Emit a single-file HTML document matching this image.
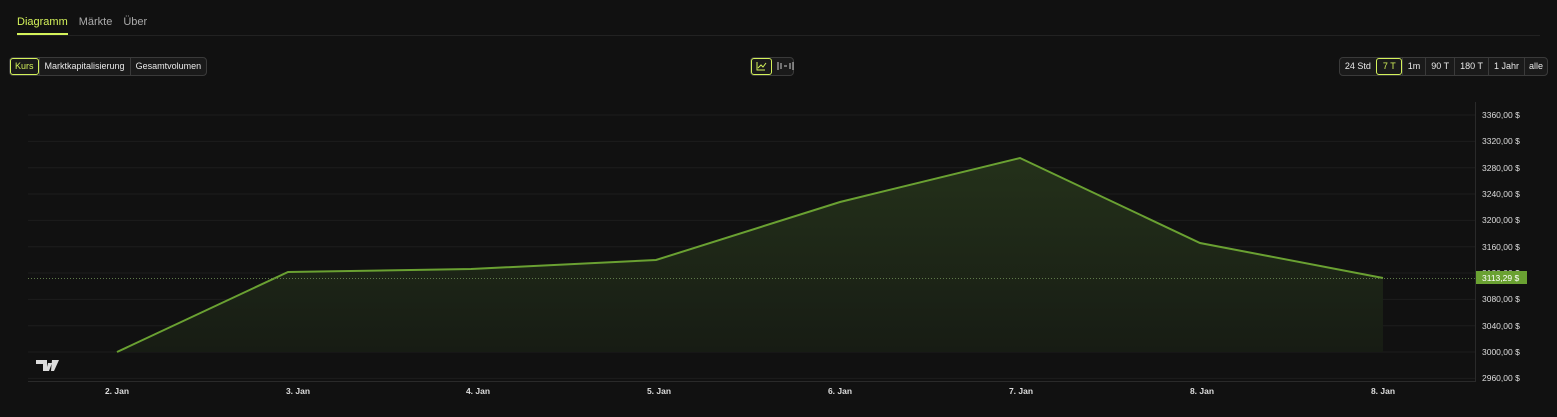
<!DOCTYPE html>
<html><head><style>
body{margin:0;background:#111;width:1557px;height:417px;overflow:hidden;font-family:"Liberation Sans",sans-serif;color:#ddd;position:relative}
.tabs{position:absolute;left:17px;top:16px;font-size:11px;display:flex;gap:11px}
.tabs span{color:#aaa}
.tabs .a{color:#d4f25a;border-bottom:2px solid #d4f25a;padding-bottom:5px}
.hr{position:absolute;left:17px;right:17px;top:35px;height:1px;background:#222}
.grp{position:absolute;top:57px;display:flex;border:1px solid #3a3a3a;border-radius:4px;background:#1a1a1a;font-size:9px;height:17px;white-space:nowrap}
.grp span{padding:0 5px;line-height:17px;border-left:1px solid #3a3a3a;color:#e8e8e8;white-space:nowrap}
.grp span:first-child{border-left:none}
.grp .s{outline:1px solid #d4f25a;outline-offset:-1px;border-radius:3px;color:#d4f25a}
svg{position:absolute;left:0;top:0}
</style></head><body>
<div class="tabs"><span class="a">Diagramm</span><span>Märkte</span><span>Über</span></div>
<div class="hr"></div>
<div class="grp" style="left:9px"><span class="s">Kurs</span><span>Marktkapitalisierung</span><span>Gesamtvolumen</span></div>
<div class="grp" style="left:750px;width:42px"><span class="s" style="width:11px;padding:0 5px"></span><span style="width:10px;border:none"></span></div>
<div class="grp" style="right:9px"><span>24 Std</span><span class="s" style="padding:0 6px">7 T</span><span>1m</span><span>90 T</span><span>180 T</span><span>1 Jahr</span><span style="padding:0 4px">alle</span></div>
<svg width="1557" height="417">
<defs><linearGradient id="g" x1="0" y1="0" x2="0" y2="1" gradientUnits="objectBoundingBox"><stop offset="0" stop-color="#24311a"/><stop offset="1" stop-color="#171c14"/></linearGradient></defs>
<g stroke="#d4f25a" stroke-width="1" fill="none"><polyline points="757,62 757,70 765,70"/><polyline points="758,68 761,65 763,67 766,63"/></g>
<g stroke="#ccc" stroke-width="1" fill="none"><path d="M778,62v8M781,63v6M784,66h3M790,63v6M793,62v8"/></g>
<g stroke="#1d1d1d">
<line x1="28" x2="1475" y1="115" y2="115"/><line x1="28" x2="1475" y1="141.4" y2="141.4"/><line x1="28" x2="1475" y1="167.7" y2="167.7"/><line x1="28" x2="1475" y1="194" y2="194"/><line x1="28" x2="1475" y1="220.4" y2="220.4"/><line x1="28" x2="1475" y1="246.7" y2="246.7"/><line x1="28" x2="1475" y1="273" y2="273"/><line x1="28" x2="1475" y1="299.4" y2="299.4"/><line x1="28" x2="1475" y1="325.7" y2="325.7"/><line x1="28" x2="1475" y1="352" y2="352"/><line x1="28" x2="1475" y1="378.4" y2="378.4"/>
</g>
<line x1="28" x2="1475" y1="381.5" y2="381.5" stroke="#2a2a2a"/>
<line x1="1475.5" x2="1475.5" y1="102" y2="382" stroke="#2a2a2a"/>
<path d="M117,352 L288,272 L471,269 L656,260 L840,202 L1020,158 L1200,243 L1383,278 L1383,352 Z" fill="url(#g)"/>
<polyline points="117,352 288,272 471,269 656,260 840,202 1020,158 1200,243 1383,278" fill="none" stroke="#6aa132" stroke-width="2"/>
<line x1="28" x2="1475" y1="278.5" y2="278.5" stroke="#5f7a4a" stroke-dasharray="1,2"/>
<g font-size="8.5" fill="#ddd">
<text x="1482" y="118">3360,00 $</text><text x="1482" y="144">3320,00 $</text><text x="1482" y="171">3280,00 $</text><text x="1482" y="197">3240,00 $</text><text x="1482" y="223">3200,00 $</text><text x="1482" y="250">3160,00 $</text><text x="1482" y="276">3120,00 $</text><text x="1482" y="302">3080,00 $</text><text x="1482" y="329">3040,00 $</text><text x="1482" y="355">3000,00 $</text><text x="1482" y="381">2960,00 $</text>
</g>
<rect x="1476" y="271" width="51" height="13" fill="#6aa132"/>
<text x="1482" y="281" font-size="8.5" fill="#fff">3113,29 $</text>
<g font-size="8.5" fill="#ddd" text-anchor="middle" font-weight="bold">
<text x="117" y="394">2. Jan</text><text x="298" y="394">3. Jan</text><text x="478" y="394">4. Jan</text><text x="659" y="394">5. Jan</text><text x="840" y="394">6. Jan</text><text x="1021" y="394">7. Jan</text><text x="1202" y="394">8. Jan</text><text x="1383" y="394">8. Jan</text>
</g>
<path d="M36,360h11v11h-4v-7h-7z M48,363h4l-3,8h-3z M52,360h7l-5,11h-3z" fill="#ddd"/>
</svg>
</body></html>
